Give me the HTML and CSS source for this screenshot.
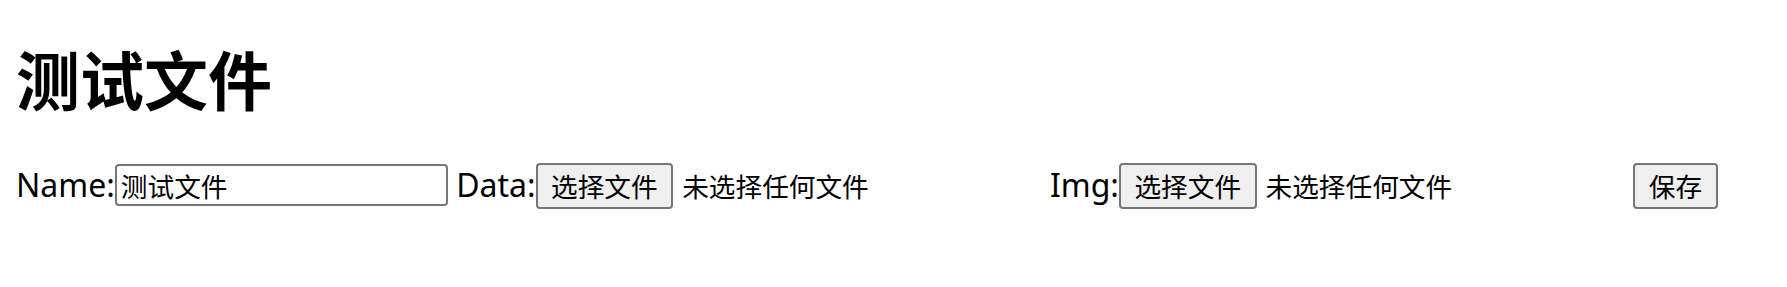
FILE: index.html
```html
<!DOCTYPE html>
<html lang="zh-CN">
<head>
<meta charset="utf-8">
<title>测试文件</title>
<link rel="stylesheet" href="styles.css">
</head>
<body>
<div class="page">
<h1 class="title">测试文件</h1>
<form class="row"><label class="field-label" for="name">Name:</label><input id="name" class="text-input" type="text" value="测试文件"> <label class="field-label">Data:</label><span class="file"><button type="button" class="btn">选择文件</button><span class="file-status">未选择任何文件</span></span> <label class="field-label">Img:</label><span class="file"><button type="button" class="btn">选择文件</button><span class="file-status">未选择任何文件</span></span> <button type="button" class="btn">保存</button></form>
</div>
</body>
</html>
```
FILE: styles.css
```css
html, body {
  margin: 0;
  padding: 0;
  background: #ffffff;
  color: #000000;
}

.page {
  padding: 0 16px;
  font-family: "Noto Sans", "Noto Sans CJK SC", sans-serif;
}

.title {
  margin: 35px 0 0;
  font-family: "Noto Sans CJK SC", sans-serif;
  font-size: 64px;
  font-weight: 700;
  line-height: 84px;
}

.row {
  margin: 41.6px 0 0;
  font-size: 32px;
  line-height: 48px;
  white-space: nowrap;
}

.field-label {
  font-family: "Noto Sans", "Noto Sans CJK SC", sans-serif;
}

.text-input {
  box-sizing: border-box;
  width: 333px;
  height: 42px;
  margin: 0;
  padding: 2px 4px;
  border: 2px solid #767676;
  border-radius: 4px;
  font-family: "Noto Sans CJK SC", sans-serif;
  font-size: 26.67px;
  line-height: 34px;
  color: #000000;
  background: #ffffff;
  vertical-align: baseline;
}

.file {
  display: inline-block;
  width: 506px;
  white-space: nowrap;
}

.btn {
  box-sizing: border-box;
  margin: 0;
  padding: 3px 13.5px;
  border: 2px solid #767676;
  border-radius: 4px;
  background: #efefef;
  color: #000000;
  font-family: "Noto Sans CJK SC", sans-serif;
  font-size: 26.67px;
  line-height: 36px;
  vertical-align: baseline;
}

.file-status {
  margin-left: 9px;
  font-family: "Noto Sans CJK SC", sans-serif;
  font-size: 26.67px;
}
```
